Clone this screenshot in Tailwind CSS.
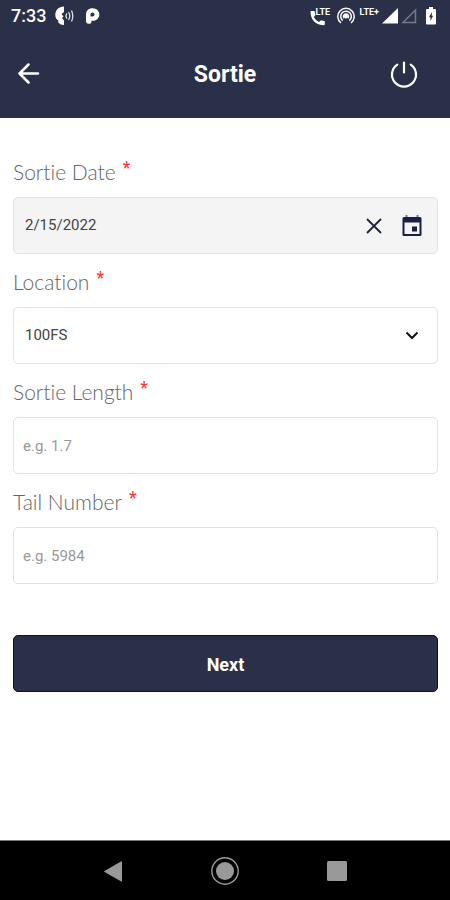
<!DOCTYPE html>
<html lang="en">
<head>
<meta charset="utf-8">
<meta name="viewport" content="width=device-width, initial-scale=1">
<title>Sortie</title>
<script src="https://cdn.jsdelivr.net/npm/@tailwindcss/browser@4"></script>
</head>
<body class="flex min-h-screen flex-col bg-white font-['Roboto',sans-serif]">
<header class="bg-[#2a3048] text-white">
  <div class="flex h-8 items-center pr-[13px] pl-[11px]">
    <span class="text-lg leading-8 font-medium">7:33</span>
    <svg class="ml-2 h-5 w-5" viewBox="0 0 20 20" fill="none" aria-hidden="true">
      <path d="M10 .5C4.500.5 1.300 4.500 1.300 9c0 2.500 1 4.500 3 5.500V16.500q2 2.500 5.700 2.500V14.500l-2-2.500 1.500-1.500-2-2.500L10 6Z" fill="#fff"/>
      <path d="M13 7.500q-2 2.500 0 5M14.500 6q2.500 4 0 8M17.500 4.500q2.500 5.500 0 11" stroke="#dfe0e5" stroke-width="1.300"/>
    </svg>
    <svg class="ml-3 h-4 w-3.5" viewBox="0 0 14 16" aria-hidden="true">
      <path fill="#fff" fill-rule="evenodd" d="M0 7C0 2.500 2.500.2 6.500.2S13.300 3 13.300 6.500 10.500 12.800 7 12.800H5.500V13.500Q5.500 15.800 2.700 15.800T0 13.500ZM6.500 4.500a2 2 0 0 0-2 2V8.500H6.500a2 2 0 0 0 0-4Z"/>
    </svg>
    <span class="ml-auto flex items-center">
      <span class="relative block h-5 w-6">
        <svg class="absolute top-1 left-0 h-4 w-4" viewBox="0 0 16 16" aria-hidden="true"><path fill="#fff" d="M1 1H4.500L5.500 5 3.800 7q1.700 3.500 5.200 5l2-1.700 3.800 1V14.500Q14.500 15.500 13 15.300 1 14 .5 2Q.5 1 1 1Z"/></svg>
        <span class="absolute top-0 left-1.5 text-[9px] leading-3 font-bold">LTE</span>
      </span>
      <svg class="ml-[3px] h-[18px] w-[18px]" viewBox="0 0 18 18" fill="none" stroke="#fff" stroke-width="1.500" aria-hidden="true">
        <path d="M4 16A8.200 8.200 0 1 1 14 16M5.700 13.600A5.300 5.300 0 1 1 12.300 13.600M7.300 11.300A2.500 2.500 0 1 1 10.700 11.300"/><circle cx="9" cy="9.500" r="1.200" fill="#fff"/>
      </svg>
      <span class="ml-[5px] h-5 text-[9px] leading-3 font-bold">LTE+</span>
      <svg class="ml-[3px] h-4 w-4" viewBox="0 0 16 16" aria-hidden="true"><path d="M16 0V15.500H0Z" fill="#fff"/></svg>
      <svg class="ml-[3px] h-4 w-4" viewBox="0 0 16 16" aria-hidden="true"><path d="M14.500 2V14.500H2Z" fill="none" stroke="#747889" stroke-width="1.500"/></svg>
      <svg class="ml-2 h-[18px] w-3" viewBox="0 0 12 18" aria-hidden="true"><path d="M4 0H8V2H10Q11 2 11 3V16.500Q11 17.500 10 17.500H2Q1 17.500 1 16.500V3Q1 2 2 2H4Z" fill="#fff"/><path d="M6.800 5 4 10.300H5.500V14L8.100 8.700H6.800Z" fill="#2a3048"/></svg>
    </span>
  </div>
  <div class="grid h-[86px] grid-cols-[1fr_auto_1fr] items-center px-4">
    <button type="button" aria-label="Back" class="justify-self-start">
      <svg class="h-6 w-6" viewBox="0 0 24 24" fill="none" stroke="#fff" stroke-width="2.500" stroke-linecap="round" stroke-linejoin="round"><path d="M22 10.500H3.500M12.500 1.500l-9 9 9 9"/></svg>
    </button>
    <h1 class="text-[23px] leading-8 font-bold">Sortie</h1>
    <button type="button" aria-label="Log out" class="mr-4 justify-self-end">
      <svg class="h-7 w-7" viewBox="0 0 28 28" fill="none" stroke="#fff" stroke-width="2.200" stroke-linecap="round"><path d="M14 1.500v10M7.300 3.600A12 12 0 1 0 20.700 3.600"/></svg>
    </button>
  </div>
</header>

<main class="flex-1 px-3 pt-[26px] pl-[13px]">
  <form>
    <label for="date" class="flex h-[53px] items-center gap-[7px] pt-0.5 font-['Lato',sans-serif] text-[21px] font-light text-[#666] [font-variant-ligatures:none]">Sortie Date <span class="pb-2 font-['Roboto',sans-serif] text-lg font-normal text-[#f33]">*</span></label>
    <div class="flex h-[57px] items-center rounded-[5px] border border-[#e2e2e2] bg-[#f4f4f4] pr-[13px] pl-[11px]">
      <input id="date" type="text" value="2/15/2022" class="min-w-0 flex-1 bg-transparent text-[15px] text-[#444] outline-none">
      <button type="button" aria-label="Clear date">
        <svg class="h-6 w-6" viewBox="0 0 24 24" fill="none" stroke="#20233a" stroke-width="1.800"><path d="m5 5 14 14M19 5 5 19"/></svg>
      </button>
      <button type="button" aria-label="Choose date" class="ml-3.5">
        <svg class="h-6 w-6" viewBox="0 0 24 24" aria-hidden="true"><path d="M5.500 1h2v3h-2ZM16.500 1h2v3h-2Z" fill="#777a8a"/><path fill="#1b1d45" fill-rule="evenodd" d="M4 3H20Q21.500 3 21.500 4.500V20.500Q21.500 22 20 22H4Q2.500 22 2.500 20.500V4.500Q2.500 3 4 3ZM4.500 8.500V20H19.500V8.500ZM12 12.500H17V17.500H12Z"/></svg>
      </button>
    </div>

    <label for="location" class="flex h-[53px] items-center gap-[7px] pt-0.5 font-['Lato',sans-serif] text-[21px] font-light text-[#666] [font-variant-ligatures:none]">Location <span class="pb-2 font-['Roboto',sans-serif] text-lg font-normal text-[#f33]">*</span></label>
    <div class="relative">
      <select id="location" class="block h-[57px] w-full appearance-none rounded-[5px] border border-[#e2e2e2] bg-white px-[11px] text-[15px] text-[#444]"><option>100FS</option></select>
      <svg class="pointer-events-none absolute top-4 right-3.5 h-6 w-6" viewBox="0 0 24 24" fill="none" stroke="#111" stroke-width="2" aria-hidden="true"><path d="m6.500 9.500 5.500 5.500 5.500-5.500"/></svg>
    </div>

    <label for="length" class="flex h-[53px] items-center gap-[7px] pt-0.5 font-['Lato',sans-serif] text-[21px] font-light text-[#666] [font-variant-ligatures:none]">Sortie Length <span class="pb-2 font-['Roboto',sans-serif] text-lg font-normal text-[#f33]">*</span></label>
    <input id="length" type="text" placeholder="e.g. 1.7" class="block h-[57px] w-full rounded-[5px] border border-[#e2e2e2] bg-white px-[9px] text-[15px] placeholder:text-[#999]">

    <label for="tail" class="flex h-[53px] items-center gap-[7px] pt-0.5 font-['Lato',sans-serif] text-[21px] font-light text-[#666] [font-variant-ligatures:none]">Tail Number <span class="pb-2 font-['Roboto',sans-serif] text-lg font-normal text-[#f33]">*</span></label>
    <input id="tail" type="text" placeholder="e.g. 5984" class="block h-[57px] w-full rounded-[5px] border border-[#e2e2e2] bg-white px-[9px] text-[15px] placeholder:text-[#999]">

    <button type="submit" class="mt-[51px] h-[57px] w-full rounded-[5px] border border-[#0c1030] bg-[#2a3048] pt-0.5 text-lg font-bold text-white">Next</button>
  </form>
</main>

<nav class="grid h-[60px] grid-cols-3 items-center border-t border-[#777] bg-black px-[57px]">
  <button type="button" aria-label="System back" class="justify-self-center"><svg class="h-6 w-6" viewBox="0 0 24 24" fill="#999"><path d="M21 2.500V22.500Q21 23 20.300 22.500L3.500 13Q2.800 12.500 3.500 12L20.300 2.200Q21 2 21 2.500Z"/></svg></button>
  <button type="button" aria-label="Home" class="justify-self-center"><svg class="h-7 w-7" viewBox="0 0 28 28" fill="#999"><circle cx="14" cy="14" r="9"/><circle cx="14" cy="14" r="13.200" fill="none" stroke="#999" stroke-width="1.400"/></svg></button>
  <button type="button" aria-label="Recent apps" class="justify-self-center"><svg class="h-5 w-5" viewBox="0 0 20 20" fill="#999"><rect width="20" height="20" rx="1.500"/></svg></button>
</nav>
</body>
</html>
